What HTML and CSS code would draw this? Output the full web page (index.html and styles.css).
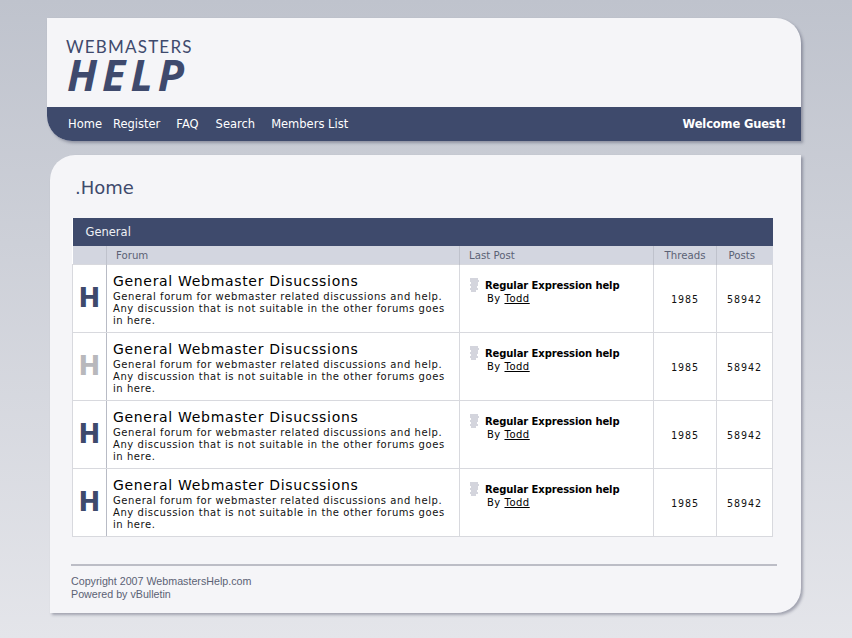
FILE: index.html
```html
<!DOCTYPE html>
<html>
<head>
<meta charset="UTF-8">
<title>WebmastersHelp</title>
<link rel="stylesheet" href="styles.css">
</head>
<body>
	<div class="header">
		<div class="logo">
			<div class="logo-top">WEBMASTERS</div>
			<div class="logo-big">HELP</div>
		</div>
		<div class="nav">
			<a href="#" class="nav-home">Home</a>
			<a href="#" class="nav-register">Register</a>
			<a href="#" class="nav-faq">FAQ</a>
			<a href="#" class="nav-search">Search</a>
			<a href="#">Members List</a>
			<span class="welcome">Welcome Guest!</span>
		</div>
	</div>

	<div class="main">
		<h1>.Home</h1>
		<table class="forums">
			<colgroup>
				<col class="c-icon">
				<col class="c-forum">
				<col class="c-last">
				<col class="c-threads">
				<col class="c-posts">
			</colgroup>
			<tr>
				<th colspan="5" class="cat">General</th>
			</tr>
			<tr class="heads">
				<td></td>
				<td class="pad">Forum</td>
				<td class="pad">Last Post</td>
				<td class="mid">Threads</td>
				<td class="mid">Posts</td>
			</tr>
			<tr class="row">
				<td class="icon">H</td>
				<td class="info">
					<a href="#" class="title">General Webmaster Disucssions</a>
					<p>General forum for webmaster related discussions and help. Any discussion that is not suitable in the other forums goes in here.</p>
				</td>
				<td class="last">
					<div class="last-title">
						<svg class="doc" width="10" height="14" viewBox="0 0 10 14"><path d="M0 1h8M0 3h9M1 5h7M0 7h8M1 9h6M0 11h8M1 13h5" stroke="#c6c8d2" stroke-width="1.4" fill="none"/></svg>
						<b>Regular Expression help</b>
					</div>
					<div class="by">By <a href="#">Todd</a></div>
				</td>
				<td class="num">1985</td>
				<td class="num">58942</td>
			</tr>
			<tr class="row">
				<td class="icon off">H</td>
				<td class="info">
					<a href="#" class="title">General Webmaster Disucssions</a>
					<p>General forum for webmaster related discussions and help. Any discussion that is not suitable in the other forums goes in here.</p>
				</td>
				<td class="last">
					<div class="last-title">
						<svg class="doc" width="10" height="14" viewBox="0 0 10 14"><path d="M0 1h8M0 3h9M1 5h7M0 7h8M1 9h6M0 11h8M1 13h5" stroke="#c6c8d2" stroke-width="1.4" fill="none"/></svg>
						<b>Regular Expression help</b>
					</div>
					<div class="by">By <a href="#">Todd</a></div>
				</td>
				<td class="num">1985</td>
				<td class="num">58942</td>
			</tr>
			<tr class="row">
				<td class="icon">H</td>
				<td class="info">
					<a href="#" class="title">General Webmaster Disucssions</a>
					<p>General forum for webmaster related discussions and help. Any discussion that is not suitable in the other forums goes in here.</p>
				</td>
				<td class="last">
					<div class="last-title">
						<svg class="doc" width="10" height="14" viewBox="0 0 10 14"><path d="M0 1h8M0 3h9M1 5h7M0 7h8M1 9h6M0 11h8M1 13h5" stroke="#c6c8d2" stroke-width="1.4" fill="none"/></svg>
						<b>Regular Expression help</b>
					</div>
					<div class="by">By <a href="#">Todd</a></div>
				</td>
				<td class="num">1985</td>
				<td class="num">58942</td>
			</tr>
			<tr class="row">
				<td class="icon">H</td>
				<td class="info">
					<a href="#" class="title">General Webmaster Disucssions</a>
					<p>General forum for webmaster related discussions and help. Any discussion that is not suitable in the other forums goes in here.</p>
				</td>
				<td class="last">
					<div class="last-title">
						<svg class="doc" width="10" height="14" viewBox="0 0 10 14"><path d="M0 1h8M0 3h9M1 5h7M0 7h8M1 9h6M0 11h8M1 13h5" stroke="#c6c8d2" stroke-width="1.4" fill="none"/></svg>
						<b>Regular Expression help</b>
					</div>
					<div class="by">By <a href="#">Todd</a></div>
				</td>
				<td class="num">1985</td>
				<td class="num">58942</td>
			</tr>
		</table>
		<div class="footer">
			Copyright 2007 WebmastersHelp.com<br>
			Powered by vBulletin
		</div>
	</div>
</body>
</html>
```

FILE: styles.css
```css
html, body {
	margin: 0;
	height: 638px;
	overflow: hidden;
}

body {
	padding: 18px 51px 0 47px;
	box-sizing: border-box;
	background: linear-gradient(#bfc3cd, #e4e5ea);
	font-family: "DejaVu Sans", sans-serif;
}

.header {
	height: 123px;
	background: #f5f5f8;
	border-radius: 0 25px 0 25px;
	box-shadow: 2px 2px 3px rgba(40, 44, 70, 0.35);
	display: flex;
	flex-direction: column;
}

.logo {
	flex: 1;
	padding: 22px 0 0 19px;
	color: #3f4a6d;
}

.logo-top {
	font-family: "Lato", sans-serif;
	font-size: 17px;
	line-height: 14px;
	letter-spacing: 1.2px;
}

.logo-big {
	font-family: "Open Sans", sans-serif;
	font-weight: 700;
	font-style: italic;
	font-size: 43px;
	line-height: 32px;
	margin: 5px 0 0 1px;
	letter-spacing: 5px;
}

.nav {
	height: 34px;
	background: #3e4a6c;
	border-radius: 0 0 0 25px;
	display: flex;
	align-items: center;
	padding: 0 15px 0 21px;
	font-size: 11.5px;
}

.nav a {
	color: #fff;
	text-decoration: none;
	margin-right: 16px;
}

.nav .nav-home { margin-right: 11px; }
.nav .nav-faq { margin-right: 17px; }

.welcome {
	margin-left: auto;
	color: #fff;
	font-weight: bold;
	letter-spacing: -0.15px;
}

.main {
	margin: 14px 0 0 3px;
	height: 458px;
	background: #f5f5f8;
	border-radius: 25px 0 25px 0;
	box-shadow: 2px 2px 3px rgba(40, 44, 70, 0.35);
	padding: 21px 0 0 22px;
	box-sizing: border-box;
}

h1 {
	margin: 0 0 18px 3px;
	font-size: 18px;
	line-height: 24px;
	font-weight: normal;
	color: #3e4a6c;
}

.forums {
	width: 700px;
	border-collapse: collapse;
	table-layout: fixed;
	font-size: 10px;
	background: #fff;
}

.c-icon { width: 34px; }
.c-forum { width: 353px; }
.c-last { width: 194px; }
.c-threads { width: 63px; }
.c-posts { width: 56px; }

.cat {
	height: 28px;
	padding: 0 0 0 13px;
	background: #3e4a6c;
	color: #eef0f4;
	font-size: 11.5px;
	font-weight: normal;
	text-align: left;
}

.heads td {
	height: 18px;
	padding: 0;
	background: #d3d6e0;
	color: #5b6275;
	font-size: 10.2px;
	border-right: 1px solid #bfc2cc;
}

.heads .pad { padding-left: 9px; }
.heads .mid { text-align: center; }
.heads .mid:last-child {
	border-right: 0;
	padding-right: 6px;
}

.row td {
	height: 68px;
	padding: 0;
	border: 1px solid #d8d9de;
	box-sizing: border-box;
	vertical-align: top;
}

.row .icon {
	font-weight: bold;
	font-size: 26px;
	padding-bottom: 2px;
	color: #3e4a6c;
	text-align: center;
	vertical-align: middle;
	border-right: 1px solid #b8bbc5;
}

.row .off { color: #b8b8bc; }

.row .info { padding: 8px 4px 0 6px; }

.title {
	display: block;
	color: #000;
	text-decoration: none;
	font-size: 14px;
	line-height: 17px;
	margin-bottom: 1px;
	letter-spacing: 0.68px;
}

.info p {
	margin: 0;
	font-size: 10px;
	line-height: 12px;
	color: #111;
	letter-spacing: 0.56px;
}

.row .last { padding: 14px 0 0 10px; }

.last-title {
	display: flex;
	align-items: flex-start;
	gap: 5px;
	color: #000;
	height: 13px;
	line-height: 13px;
	letter-spacing: -0.1px;
}

.doc {
	flex: none;
	margin-top: -1px;
}

.by {
	margin: 0 0 0 17px;
	line-height: 13px;
	letter-spacing: 0.5px;
}

.by a { color: #000; }

.row .num {
	text-align: center;
	vertical-align: middle;
	font-family: "DejaVu Sans Mono", monospace;
	color: #111;
	letter-spacing: 1px;
	padding-top: 1px;
}

.footer {
	margin: 27px 0 0 -1px;
	width: 706px;
	border-top: 2px solid #bcbdc6;
	padding-top: 9px;
	font-family: "Liberation Sans", sans-serif;
	font-size: 10.7px;
	line-height: 13px;
	color: #5b6275;
}
```
